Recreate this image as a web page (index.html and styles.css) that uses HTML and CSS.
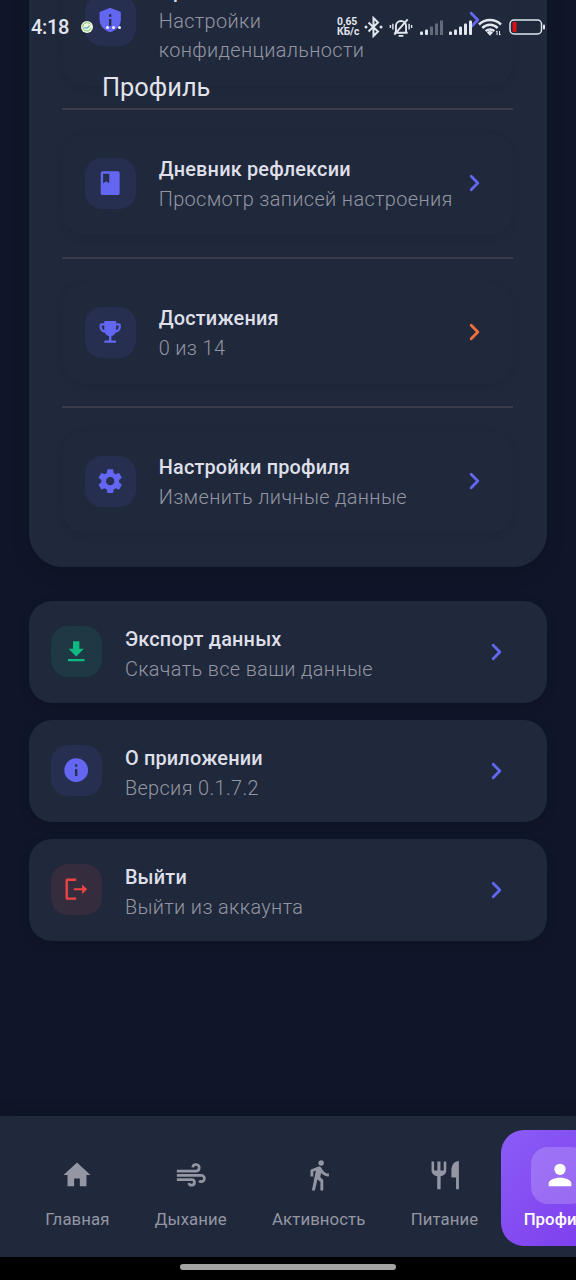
FILE: index.html
```html
<!DOCTYPE html>
<html lang="ru">
<head>
<meta charset="utf-8">
<title>Профиль</title>
<link rel="stylesheet" href="styles.css">
</head>
<body>
<div class="screen">
  <main class="content">
    <section class="group">
      <div class="row">
        <span class="tile"><svg class="ico" viewBox="0 0 24 24"><path fill-rule="evenodd" d="M12 1.500 3 5v6.500c0 5 3.800 9.400 9 10.700 5.200-1.300 9-5.700 9-10.700V5zM11 7h2v2h-2zm0 4h2v6h-2z"/></svg></span>
        <div class="text"><div class="title">Приватность</div><div class="sub">Настройки<br>конфиденциальности</div></div>
        <svg class="chev" viewBox="0 0 24 24"><path d="M9.3 7.300 14 12l-4.700 4.700"/></svg>
      </div>
      <hr class="line">
      <div class="row">
        <span class="tile"><svg class="ico" viewBox="0 0 24 24"><path fill-rule="evenodd" d="M5.600 2h12.800A1.600 1.600 0 0 1 20 3.600v16.800a1.600 1.600 0 0 1-1.600 1.600H5.600A1.600 1.600 0 0 1 4 20.400V3.600A1.600 1.600 0 0 1 5.600 2zM6 4v8l2.600-1.700 2.600 1.700V4z"/></svg></span>
        <div class="text"><div class="title">Дневник рефлексии</div><div class="sub">Просмотр записей настроения</div></div>
        <svg class="chev" viewBox="0 0 24 24"><path d="M9.3 7.300 14 12l-4.700 4.700"/></svg>
      </div>
      <hr class="line">
      <div class="row">
        <span class="tile"><svg class="ico" viewBox="0 0 24 24"><path fill-rule="evenodd" d="M7 2.500h10v2h2.500A1.500 1.500 0 0 1 21 6v1.500c0 2.600-1.900 4.700-4.400 5A5 5 0 0 1 13 15.400V19h3a1 1 0 0 1 1 1v1H7v-1a1 1 0 0 1 1-1h3v-3.600a5 5 0 0 1-3.600-2.900C4.900 12.200 3 10.100 3 7.500V6a1.500 1.500 0 0 1 1.500-1.500H7zM4.800 6.300v1.200A3 3 0 0 0 7 10.400V6.300zM17 6.300v4.100a3 3 0 0 0 2.200-2.900V6.300z"/></svg></span>
        <div class="text"><div class="title">Достижения</div><div class="sub">0 из 14</div></div>
        <svg class="chev orange" viewBox="0 0 24 24"><path d="M9.3 7.300 14 12l-4.700 4.700"/></svg>
      </div>
      <hr class="line">
      <div class="row">
        <span class="tile"><svg class="ico" viewBox="0 0 24 24"><path d="M12 15.500A3.500 3.500 0 0 1 8.500 12 3.500 3.500 0 0 1 12 8.500a3.500 3.500 0 0 1 3.500 3.500 3.500 3.500 0 0 1-3.500 3.500m7.430-2.530c.04-.32.07-.64.07-.97s-.03-.66-.07-1l2.110-1.630c.19-.15.24-.42.12-.64l-2-3.460c-.12-.22-.39-.31-.61-.22l-2.490 1c-.52-.39-1.060-.73-1.690-.98l-.37-2.650A.506.506 0 0 0 14 2h-4c-.25 0-.46.18-.5.420l-.37 2.650c-.63.250-1.170.590-1.690.980l-2.490-1c-.22-.09-.49 0-.61.220l-2 3.460c-.13.220-.07.490.12.640L4.570 11c-.04.340-.07.670-.07 1s.030.650.070.970l-2.110 1.660c-.19.150-.25.420-.12.640l2 3.460c.12.220.39.300.61.220l2.490-1.010c.52.400 1.060.740 1.690.990l.37 2.650c.04.240.25.420.5.420h4c.25 0 .46-.18.500-.42l.37-2.650c.63-.26 1.170-.59 1.690-.99l2.490 1.010c.22.080.49 0 .61-.22l2-3.460c.12-.22.070-.49-.12-.64z"/></svg></span>
        <div class="text"><div class="title">Настройки профиля</div><div class="sub">Изменить личные данные</div></div>
        <svg class="chev" viewBox="0 0 24 24"><path d="M9.3 7.300 14 12l-4.700 4.700"/></svg>
      </div>
    </section>

    <section class="cards">
      <div class="row card">
        <span class="tile green"><svg class="ico" viewBox="0 0 24 24"><path d="M9.300 3.500h5.400v6.500h3.800L12 16.500 5.500 10h3.800zM5 18.500h14v2H5z"/></svg></span>
        <div class="text"><div class="title">Экспорт данных</div><div class="sub">Скачать все ваши данные</div></div>
        <svg class="chev" viewBox="0 0 24 24"><path d="M9.3 7.300 14 12l-4.700 4.700"/></svg>
      </div>
      <div class="row card">
        <span class="tile"><svg class="ico" viewBox="0 0 24 24"><path fill-rule="evenodd" d="M12 2a10 10 0 1 0 0 20 10 10 0 0 0 0-20zM11 7h2v2h-2zm0 4h2v6h-2z"/></svg></span>
        <div class="text"><div class="title">О приложении</div><div class="sub">Версия 0.1.7.2</div></div>
        <svg class="chev" viewBox="0 0 24 24"><path d="M9.3 7.300 14 12l-4.700 4.700"/></svg>
      </div>
      <div class="row card">
        <span class="tile red"><svg class="ico" viewBox="0 0 24 24"><path d="M4.300 3H12v2H5v14h7v2H4.300A1.300 1.300 0 0 1 3 19.700V4.300A1.300 1.300 0 0 1 4.300 3zM10 11.100h7V8l4.300 4-4.300 4v-3.100h-7z"/></svg></span>
        <div class="text"><div class="title">Выйти</div><div class="sub">Выйти из аккаунта</div></div>
        <svg class="chev" viewBox="0 0 24 24"><path d="M9.3 7.300 14 12l-4.700 4.700"/></svg>
      </div>
    </section>
  </main>

  <header class="overlay">
    <div class="status">
      <span class="time">4:18</span>
      <svg class="app" viewBox="0 0 12 12"><circle cx="6" cy="6" r="6" fill="#f2f7dc"/><path d="M9.500 3.500A4.200 4.200 0 1 0 10 7" fill="none" stroke="#6cc47c" stroke-width="1"/><path d="M3.500 6.500c2 1.500 4 0 5-2" fill="none" stroke="#3d9bc4" stroke-width="1.100"/></svg>
      <span class="dots"><i></i><i></i><i></i></span>
      <span class="net"><span>0,65</span><span>КБ/с</span></span>
      <svg class="bt" viewBox="0 0 20 22"><path d="m4.500 6.500 9.500 9-4.500 4.500V2L14 6.500l-9.500 9" fill="none" stroke="#e2e6ee" stroke-width="2"/><circle cx="2" cy="11" r="1.500" fill="#e2e6ee"/><circle cx="17" cy="11" r="1.500" fill="#e2e6ee"/></svg>
      <svg class="bell" viewBox="0 0 24 22"><g fill="none" stroke="#e2e6ee" stroke-width="2"><path d="M5 16.500h14M6.700 16V9.500a5.300 5.300 0 0 1 10.600 0V16M9.500 19.800h5M19 2.500 5 18.500"/><path d="M3.500 7v6M20.500 7v6M.9 8.500v3M23.100 8.500v3" stroke-width="1.500"/></g></svg>
      <svg class="sig" viewBox="0 0 24 16"><g fill="#e2e6ee"><rect x="0" y="12.500" width="3" height="3.500" rx="1"/><rect x="5" y="10.500" width="3" height="5.500" rx="1"/><g opacity=".35"><rect x="10" y="7.500" width="3" height="8.500"/><rect x="15" y="4.500" width="3" height="11.500"/><rect x="20" y="1.500" width="3" height="14.500"/></g></g></svg>
      <svg class="sig two" viewBox="0 0 24 16"><g fill="#e2e6ee"><rect x="0" y="12.500" width="3" height="3.500" rx="1"/><rect x="5" y="10.500" width="3" height="5.500" rx="1"/><rect x="10" y="7.500" width="3" height="8.500" rx="1"/><rect x="15" y="4.500" width="3" height="11.500" rx="1"/><rect x="20" y="1.500" width="3" height="14.500" rx="1"/></g></svg>
      <svg class="wifi" viewBox="0 0 24 18"><g fill="none" stroke="#e2e6ee" stroke-width="2.500"><path d="M1 6.500a16 16 0 0 1 22 0M4.300 10a11 11 0 0 1 15.400 0M7.700 13.200a6.300 6.300 0 0 1 8.600 0"/></g><path d="m8.800 14.500 3.200 3.300 3-3.300a4.500 4.500 0 0 0-6.200 0z" fill="#e2e6ee"/><path d="M19 13v4m2.500-4v4m-3.500-3 1-1.200m2.500 4.400 1.100-1.200" stroke="#e2e6ee" stroke-width="1"/></svg>
      <svg class="bat" viewBox="0 0 37 16"><rect x="1" y="1" width="31.500" height="14" rx="4" fill="none" stroke="#e2e6ee" stroke-width="1.500"/><rect x="3.500" y="3" width="4" height="10" rx="1" fill="#dd0f12"/><rect x="34" y="5.500" width="2" height="5" rx="1" fill="#e2e6ee"/></svg>
    </div>
    <h1 class="heading">Профиль</h1>
  </header>

  <nav class="nav">
    <div class="tab"><span class="nico"><svg viewBox="0 0 24 24"><path d="M10 20v-5.500h4V20h4.700v-8H21.500L12 3.200 2.500 12h2.800v8z"/></svg></span><span class="label">Главная</span></div>
    <div class="tab"><span class="nico"><svg viewBox="0 0 24 24"><path d="M2 9.200h13.500a2.300 2.300 0 1 0-2.300-2.600M2 12.200H19.300a2.250 2.250 0 1 1-1.600 3.900M2 15.200H12.500a2 2 0 1 1-2 2.400" fill="none" stroke="currentColor" stroke-width="1.900"/></svg></span><span class="label">Дыхание</span></div>
    <div class="tab"><span class="nico"><svg viewBox="0 0 24 24"><path d="M13.500 5.500c1.100 0 2-.9 2-2s-.9-2-2-2-2 .9-2 2 .9 2 2 2zM9.800 8.900 7 23h2.100l1.800-8 2.100 2v6h2v-7.500l-2.100-2 .6-3C14.800 12 16.800 13 19 13v-2c-1.900 0-3.500-1-4.300-2.400l-1-1.600c-.4-.6-1-1-1.700-1-.3 0-.5.1-.8.1L6 8.300V13h2V9.600l1.800-.7"/></svg></span><span class="label">Активность</span></div>
    <div class="tab"><span class="nico"><svg viewBox="0 0 24 24"><path d="M2.500 2.500v6.200c0 2.200 1.700 4 4 4.200v9.200h2.400v-9.200c2.300-.2 4-2 4-4.200V2.500h-1.800v6.300H8.800V2.500H6.600v6.300H4.300V2.500zM21.800 2.200c-3.200 0-5.300 2.900-5.300 6.600v5h3.300v8.300h2z"/></svg></span><span class="label">Питание</span></div>
    <div class="tab active"><span class="nico"><svg viewBox="0 0 24 24"><circle cx="12" cy="8" r="4"/><path d="M12 14c-4.420 0-8 1.790-8 4v2h16v-2c0-2.210-3.580-4-8-4z"/></svg></span><span class="label">Профиль</span></div>
  </nav>
  <div class="sys"><span class="handle"></span></div>
</div>
</body>
</html>
```
FILE: styles.css
```css
* { box-sizing: border-box; }
body { margin: 0; background: #0f172a; font-family: Roboto, "Noto Sans", sans-serif; }
.screen { position: relative; width: 576px; height: 1280px; overflow: hidden; display: flex; flex-direction: column; background: #0f1629; }
.content { flex: 1; min-height: 0; padding: 0 29px 0 28.500px; margin-top: -79px; }
.group { background: #1f293b; border-radius: 34px; padding: 34px 34px 34px 33.500px; box-shadow: 0 6px 20px rgba(0,0,0,.12); }
.row { display: flex; align-items: center; padding: 21.750px 22.700px; border-radius: 23px; }
.group .row { height: 102px; background: #1f293b; box-shadow: 0 3px 9px rgba(10,20,30,.07); }
.group .row:first-child { height: 130.500px; }
.line { border: 0; height: 2px; margin: 22.500px 0; background: #3b3b4a; }
.tile { width: 51px; height: 51px; flex: none; border-radius: 17px; display: flex; align-items: center; justify-content: center; background: #262f50; color: #6366f1; }
.tile.green { background: #1e3844; color: #10b981; }
.tile.red { background: #352c3d; color: #ef4444; }
.ico { width: 28.400px; height: 28.400px; fill: currentColor; }
.text { flex: 1; margin: 0 0 -1.700px 23px; padding-top: 1.700px; white-space: nowrap; }
.title { font-size: 19.900px; line-height: 28.500px; font-weight: 500; letter-spacing: .18px; color: #dedfe9; margin-bottom: 1.500px; }
.sub { font-size: 19.900px; line-height: 28.500px; font-weight: 300; letter-spacing: .36px; color: #9496a3; }
.chev { width: 34px; height: 34px; flex: none; margin: -1px -1.500px 0 1.500px; fill: none; stroke: #6366f1; stroke-width: 2; stroke-linecap: round; stroke-linejoin: round; }
.chev.orange { stroke: #f3703a; }
.cards { margin-top: 34px; display: flex; flex-direction: column; gap: 17px; }
.card { height: 102px; background: #1f293b; border-radius: 23px; box-shadow: 0 3px 12px rgba(0,0,0,.12); }
.card .text { padding-top: 3.700px; margin: 0 0 -3.700px 22.700px; }
.card .chev { margin: 0 10px 0 0; }

.overlay { position: absolute; top: 0; left: 0; width: 576px; }
.status { height: 54px; padding-left: 31px; display: flex; align-items: center; color: #e2e6ee; }
.time { width: 50px; font-size: 20px; font-weight: 500; letter-spacing: -.3px; }
.app { width: 12px; height: 12px; }
.dots { display: flex; gap: 3px; margin-left: 13px; width: 219px; }
.dots i { width: 3px; height: 3px; border-radius: 50%; background: #f0f0ff; }
.net { width: 27px; margin-left: 12px; display: flex; flex-direction: column; font-size: 10.300px; line-height: 10px; font-weight: 700; white-space: nowrap; }
.bt { width: 20px; height: 22px; }
.bell { width: 24px; height: 21px; margin-left: 5px; }
.sig { width: 24px; height: 16px; margin-left: 7px; }
.sig.two { margin-left: 5px; }
.wifi { width: 24px; height: 18px; margin-left: 5px; }
.bat { width: 37px; height: 16px; margin-left: 7px; }
.heading { margin: 17px 0 0 102px; font-size: 25.400px; line-height: 32px; font-weight: 400; color: #e2e3ec; }

.nav { height: 141px; flex: none; padding: 14px 0 0 22.500px; display: flex; align-items: flex-start; background: #1f293b; box-shadow: 0 -3px 14px rgba(0,0,0,.15); position: relative; color: #9496a3; }
.tab { flex: none; height: 116px; padding: 17px 22.700px 0; display: flex; flex-direction: column; align-items: center; border-radius: 23px; }
.nico { width: 57px; height: 57px; display: flex; align-items: center; justify-content: center; border-radius: 17px; }
.nico svg { width: 34px; height: 34px; margin-top: -2px; fill: currentColor; }
.label { font-size: 16.800px; line-height: 20px; margin-top: 5px; letter-spacing: .07px; }
.tab.active { color: #fff; background: linear-gradient(135deg, #8b5cf6, #7c3aed); }
.tab.active .nico { background: rgba(255,255,255,.19); }
.tab.active .label { font-weight: 500; }
.sys { height: 23px; flex: none; background: #000; display: flex; justify-content: center; padding-top: 7px; position: relative; }
.handle { width: 216px; height: 6px; border-radius: 3px; background: #a4a4a4; }
```
